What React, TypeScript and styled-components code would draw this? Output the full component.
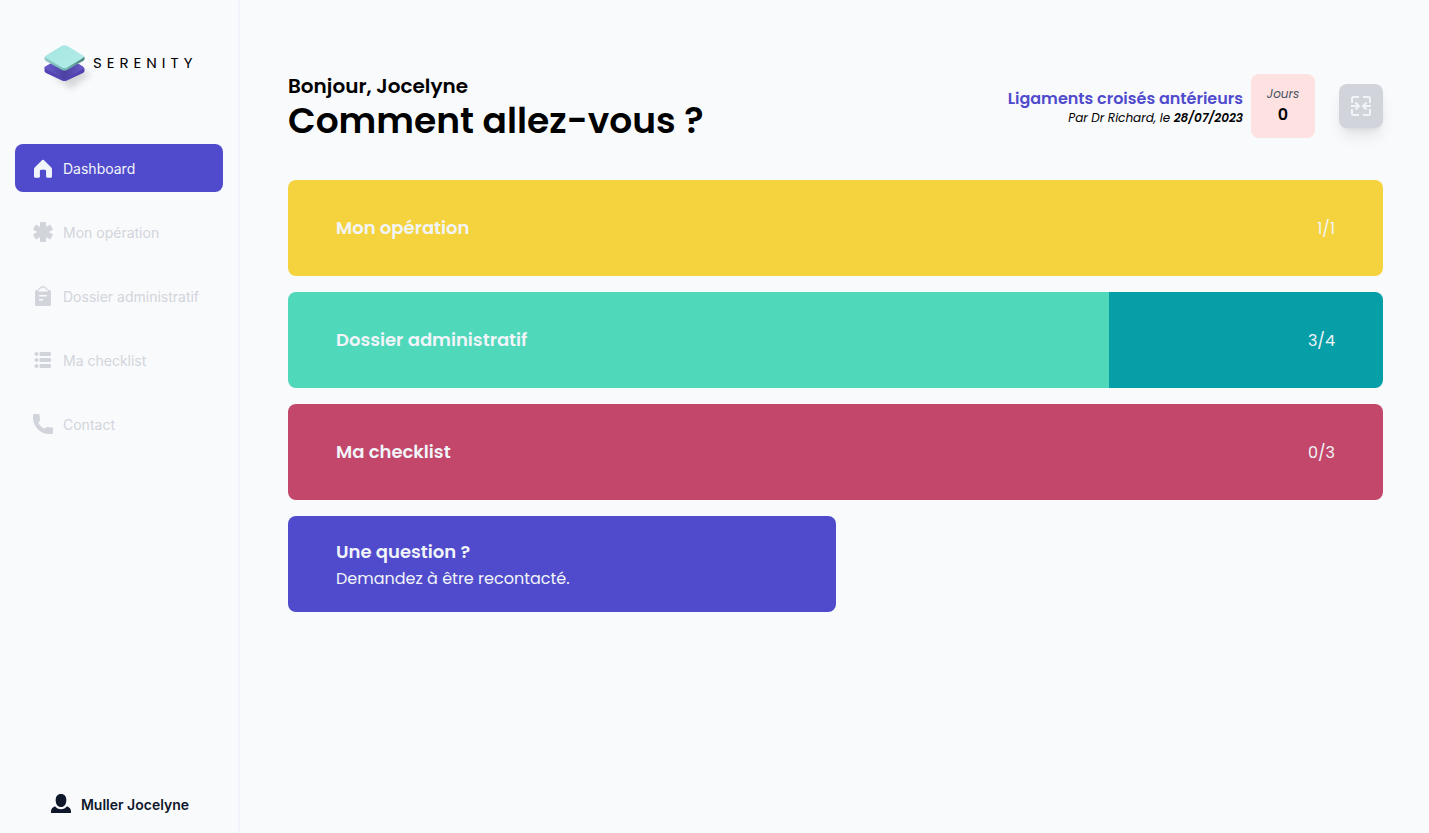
import React from 'react';
import styled, { createGlobalStyle } from 'styled-components';

const GlobalStyle = createGlobalStyle`
  * { box-sizing: border-box; }
  body {
    margin: 0;
    background: #f9fafc;
    color: #000;
    font-family: Poppins, Inter, "Open Sans", sans-serif;
  }
  h1, h2, p { margin: 0; }
  a { color: inherit; text-decoration: none; }
`;

const Page = styled.div`
  display: flex;
  min-height: 100vh;
`;

const Sidebar = styled.aside`
  display: flex;
  flex-direction: column;
  flex: none;
  width: 240px;
  min-height: 100vh;
  padding: 40px 15px 16px;
  border-right: 2px solid #f1f4fb;
  font-family: Inter, sans-serif;
`;

const Brand = styled.a`
  display: flex;
  align-items: center;
  height: 56px;
  padding-left: 25px;
  margin-bottom: 48px;
`;

const BrandName = styled.span`
  margin-top: -10px;
  font-family: Poppins, Lato, sans-serif;
  font-size: 15px;
  line-height: 20px;
  letter-spacing: 5px;
`;

const Nav = styled.nav`
  display: flex;
  flex-direction: column;
  gap: 16px;
`;

const NavLink = styled.a<{ $active?: boolean }>`
  display: flex;
  align-items: center;
  gap: 10px;
  height: 48px;
  padding: 2px 18px 0;
  border-radius: 8px;
  background: ${(p) => (p.$active ? '#504bcc' : 'transparent')};
  color: ${(p) => (p.$active ? '#f1f5f9' : '#d1d5db')};
  font-size: 14px;
  font-weight: 400;
  line-height: 20px;
  white-space: nowrap;
  svg { flex: none; margin-top: -2px; }
`;

const Profile = styled.button`
  display: flex;
  align-items: center;
  justify-content: center;
  gap: 10px;
  height: 24px;
  margin-top: auto;
  padding: 0 0 0 2px;
  border: 0;
  background: none;
  color: #0f172a;
  font: 600 14px/20px Inter, sans-serif;
  svg { margin-top: -2px; }
`;

const Main = styled.main`
  flex: 1;
  min-width: 0;
  padding: 71px 46px 48px 48px;
`;

const Header = styled.header`
  display: flex;
  align-items: center;
  justify-content: space-between;
  margin-bottom: 39px;
`;

const Hello = styled.p`
  font-size: 20px;
  font-weight: 600;
  line-height: 30px;
`;

const Title = styled.h1`
  font-size: 36px;
  font-weight: 600;
  line-height: 40px;
`;

const Operation = styled.div`
  display: flex;
  align-items: center;
`;

const Details = styled.div`
  margin-right: 8px;
  padding-top: 4px;
  text-align: right;
`;

const OperationName = styled.h2`
  color: #504bcc;
  font-size: 16px;
  font-weight: 600;
  line-height: 20px;
`;

const Surgeon = styled.p`
  font-size: 12px;
  font-style: italic;
  line-height: 18px;
  strong { font-weight: 600; }
`;

const Days = styled.div`
  display: flex;
  flex-direction: column;
  align-items: center;
  justify-content: center;
  width: 64px;
  height: 64px;
  margin-right: 24px;
  padding-bottom: 2px;
  border-radius: 8px;
  background: #fee2e2;
  strong { font-size: 16px; font-weight: 600; line-height: 22px; }
`;

const DaysLabel = styled.span`
  color: #4b5563;
  font-size: 12px;
  font-style: italic;
  line-height: 20px;
`;

const FullscreenButton = styled.button`
  display: flex;
  align-items: center;
  justify-content: center;
  width: 44px;
  height: 44px;
  padding: 0;
  border: 0;
  border-radius: 8px;
  background: #d1d5db;
  color: #f1f5f9;
  box-shadow: 0 10px 15px -3px rgba(0, 0, 0, 0.1), 0 4px 6px -4px rgba(0, 0, 0, 0.1);
`;

const Cards = styled.div`
  display: grid;
  grid-template-columns: 1fr 1fr;
  gap: 16px 0;
`;

const Card = styled.a<{ $done: string; $rest: string; $half?: boolean }>`
  display: flex;
  align-items: center;
  justify-content: space-between;
  grid-column: ${(p) => (p.$half ? 'span 1' : 'span 2')};
  height: 96px;
  padding: 0 48px;
  border-radius: 8px;
  background: ${(p) => `linear-gradient(to right, ${p.$done} 75%, ${p.$rest} 75%)`};
  color: #f1f5f9;
  font-size: 16px;
  font-weight: 400;
  line-height: 26px;
`;

const CardTitle = styled.h2`
  font-size: 18px;
  font-weight: 600;
  line-height: 28px;
`;

const CardBody = styled.div`
  padding-top: 2px;
`;

const Logo = () => (
  <svg width="53" height="56" viewBox="0 0 53 56" aria-hidden="true">
    <defs>
      <linearGradient id="tealTop" x1="0" y1="0" x2="1" y2="1">
        <stop offset="0" stopColor="#a5e5e1" />
        <stop offset="1" stopColor="#b2ede9" />
      </linearGradient>
      <linearGradient id="tealEdge" x1="0" y1="0" x2="1" y2="0">
        <stop offset="0" stopColor="#8fcac7" />
        <stop offset="0.55" stopColor="#75b8b4" />
        <stop offset="1" stopColor="#487e7b" />
      </linearGradient>
      <linearGradient id="violet" x1="0" y1="0" x2="1" y2="0">
        <stop offset="0" stopColor="#6a5cd0" />
        <stop offset="0.5" stopColor="#4b419f" />
        <stop offset="1" stopColor="#6a5acb" />
      </linearGradient>
      <filter id="soft" x="-50%" y="-50%" width="200%" height="200%">
        <feGaussianBlur stdDeviation="3" />
      </filter>
    </defs>
    <path d="M12 35L30 26l21 8-20 15z" fill="#888" opacity="0.3" filter="url(#soft)" />
    <path d="M4.500 27L22 17q2.500-1 5 0L43 27q1.500 1 1.500 2v2q0 1-1.500 2L27 40.500q-2.500 1.200-5 0L6 33q-1.500-1-1.500-2z" fill="#5144b2" />
    <path d="M6 26.500L22 17q2.500-1 5 0L43 26.500q1.500 1.500 0 2.500L27 38q-2.500 1.200-5 0L6 29q-1.500-1 0-2.500z" fill="url(#violet)" />
    <path d="M4.500 17L22 8l22.500 9v2q0 1-1.500 2L27 30q-2.500 1.200-5 0L6 21q-1.500-1-1.500-2z" fill="url(#tealEdge)" />
    <path d="M6 15.500L22 5.800q2.500-1.200 5 0L43 15.500q2 1.200 0 2.500L27 27.500q-2.500 1.200-5 0L6 18q-2-1.200 0-2.500z" fill="url(#tealTop)" />
  </svg>
);

const HomeIcon = () => (
  <svg width="20" height="20" viewBox="0 -1 20 20" fill="currentColor" aria-hidden="true">
    <path d="M9.200 1.100q.8-.8 1.600 0l7.500 7.300q.7.700.7 1.700v7.300q0 1.400-1.400 1.400h-3.100q-1.400 0-1.400-1.400v-5.200q0-1.400-1.400-1.400H8.300q-1.400 0-1.400 1.400v5.200q0 1.400-1.400 1.400H2.400Q1 18.800 1 17.400v-7.300q0-1 .7-1.700z" />
  </svg>
);

const AsteriskIcon = () => (
  <svg width="20" height="20" viewBox="0 0 20 20" fill="currentColor" aria-hidden="true">
    <rect x="7" y="0" width="6" height="20" rx="0.500" />
    <rect x="7" y="0" width="6" height="20" rx="0.500" transform="rotate(60 10 10)" />
    <rect x="7" y="0" width="6" height="20" rx="0.500" transform="rotate(120 10 10)" />
  </svg>
);

const ClipboardIcon = () => (
  <svg width="20" height="20" viewBox="0 0 20 20" aria-hidden="true">
    <path d="M5.500 4.500q0-1.500 1.700-2.300Q8 .8 10 .6q2 .2 2.800 1.600Q14.500 3 14.500 4.500" fill="none" stroke="currentColor" strokeWidth="1.200" />
    <path d="M3.500 4H5v1.500h10V4h1.500Q18 4 18 5.500v13q0 1.500-1.500 1.500h-13Q2 20 2 18.500v-13Q2 4 3.500 4z" fill="currentColor" />
    <path d="M6.700 9.700h6.600M6.700 13.700h3" stroke="#f9fafc" strokeWidth="1.600" strokeLinecap="round" />
  </svg>
);

const ListIcon = () => (
  <svg width="20" height="20" viewBox="0 0 20 20" fill="currentColor" aria-hidden="true">
    {[4, 10, 16].map((y) => (
      <React.Fragment key={y}>
        <circle cx="3.500" cy={y} r="2" />
        <rect x="6.500" y={y - 2} width="11.500" height="4" rx="1" />
      </React.Fragment>
    ))}
  </svg>
);

const PhoneIcon = () => (
  <svg width="20" height="20" viewBox="2 2 16 16" fill="currentColor" aria-hidden="true">
    <path d="M2 3a1 1 0 011-1h3.300a1 1 0 011 .9l.3 4a1 1 0 01-.5 1l-.9.700a9.500 9.500 0 005.200 5.200l.7-.9a1 1 0 011-.5l4 .3a1 1 0 01.9 1V17a1 1 0 01-1 1h-2C7.820 18 2 12.180 2 5V3z" />
  </svg>
);

const PersonIcon = () => (
  <svg width="20" height="20" viewBox="0 0 20 20" fill="currentColor" aria-hidden="true">
    <path d="M10 0c3.600 0 5.300 2.500 5.300 6.200 0 4-2.200 6.800-5.300 6.800S4.700 10.200 4.700 6.200C4.700 2.500 6.400 0 10 0z" />
    <path d="M4 12.300c1.500 2 3.500 3 6 3s4.500-1 6-3c2.500 1 4 2.700 4 5V19H0v-1.700c0-2.300 1.500-4 4-5z" />
  </svg>
);

const CollapseIcon = () => (
  <svg width="22" height="22" viewBox="0 0 22 22" fill="none" stroke="currentColor" strokeWidth="2" aria-hidden="true">
    <path d="M2 8V3.500Q2 2 3.500 2H9M13 2h5.500Q20 2 20 3.500V8M2 14v4.500Q2 20 3.500 20H9M13 20h5.500q1.500 0 1.500-1.500V14" />
    <path d="M1 11h7M5.500 7.500L9 11l-3.500 3.500M21 11h-7M16.500 7.500L13 11l3.500 3.500" />
  </svg>
);

const links = [
  { label: 'Dashboard', Icon: HomeIcon },
  { label: 'Mon opération', Icon: AsteriskIcon },
  { label: 'Dossier administratif', Icon: ClipboardIcon },
  { label: 'Ma checklist', Icon: ListIcon },
  { label: 'Contact', Icon: PhoneIcon },
];

const cards = [
  { title: 'Mon opération', count: '1/1', done: '#f5d33f', rest: '#f5d33f' },
  { title: 'Dossier administratif', count: '3/4', done: '#50d8bb', rest: '#079fa7' },
  { title: 'Ma checklist', count: '0/3', done: '#c2476b', rest: '#c2476b' },
];

export default function App() {
  return (
    <Page>
      <GlobalStyle />
      <Sidebar>
        <Brand href="#">
          <Logo />
          <BrandName>SERENITY</BrandName>
        </Brand>
        <Nav>
          {links.map(({ label, Icon }, i) => (
            <NavLink key={label} href="#" $active={i === 0}>
              <Icon />
              {label}
            </NavLink>
          ))}
        </Nav>
        <Profile type="button">
          <PersonIcon />
          Muller Jocelyne
        </Profile>
      </Sidebar>
      <Main>
        <Header>
          <div>
            <Hello>Bonjour, Jocelyne</Hello>
            <Title>Comment allez-vous ?</Title>
          </div>
          <Operation>
            <Details>
              <OperationName>Ligaments croisés antérieurs</OperationName>
              <Surgeon>
                Par Dr Richard, le <strong>28/07/2023</strong>
              </Surgeon>
            </Details>
            <Days>
              <DaysLabel>Jours</DaysLabel>
              <strong>0</strong>
            </Days>
            <FullscreenButton type="button" aria-label="Réduire">
              <CollapseIcon />
            </FullscreenButton>
          </Operation>
        </Header>
        <Cards>
          {cards.map((card) => (
            <Card key={card.title} href="#" $done={card.done} $rest={card.rest}>
              <CardTitle>{card.title}</CardTitle>
              <CardBody>{card.count}</CardBody>
            </Card>
          ))}
          <Card href="#" $done="#504bcc" $rest="#504bcc" $half>
            <CardBody>
              <CardTitle>Une question ?</CardTitle>
              <p>Demandez à être recontacté.</p>
            </CardBody>
          </Card>
        </Cards>
      </Main>
    </Page>
  );
}
